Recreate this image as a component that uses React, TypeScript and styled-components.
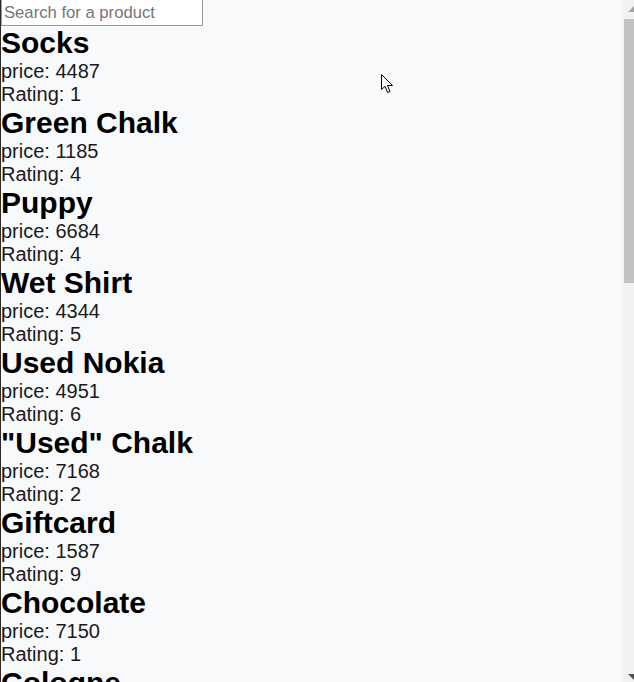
import React from "react";
import styled, { createGlobalStyle } from "styled-components";

const Global = createGlobalStyle`
  html, body { margin: 0; padding: 0; height: 100%; overflow: hidden; }
  body { background: #f8f9fb; font-family: "Liberation Sans", Arial, sans-serif; }
  #root { height: 100%; }
`;

const Page = styled.div`
  position: relative;
  height: 682px;
  box-sizing: border-box;
  border-left: 1px solid #2b2b2b;
  background: #f8f9fb;
  overflow: hidden;
  color: #111;
`;

const Search = styled.input`
  display: block;
  box-sizing: border-box;
  width: 202px;
  height: 26px;
  margin: 0;
  padding: 0 2px;
  border: 1px solid #9a9a9a;
  border-top-width: 0;
  background: #fff;
  font-family: "Liberation Sans", Arial, sans-serif;
  font-size: 16.67px;
  color: #111;
  outline: none;
  &::placeholder { color: #767676; }
`;

const List = styled.div`
  display: flex;
  flex-direction: column;
`;

const Product = styled.div`
  display: flex;
  flex-direction: column;
`;

const Name = styled.h2`
  margin: 0;
  font-size: 30px;
  font-weight: bold;
  color: #000;
  line-height: 34px;
`;

const Line = styled.div`
  font-size: 20px;
  line-height: 23px;
  color: #1a1a1a;
`;

const Scrollbar = styled.div`
  position: absolute;
  top: 0;
  right: 0;
  width: 12px;
  height: 100%;
  background: #f1f1f1;
  display: flex;
  flex-direction: column;
`;

const Arrow = styled.svg`
  display: block;
  flex: none;
`;

const Thumb = styled.div`
  margin: 2px 0 0 2px;
  height: 264px;
  background: #c1c1c1;
`;

const Spacer = styled.div`
  flex: 1;
`;

const Cursor = styled.svg`
  position: absolute;
  left: 380px;
  top: 74px;
  pointer-events: none;
`;

const products: { name: string; price: number; rating: number }[] = [
  { name: "Socks", price: 4487, rating: 1 },
  { name: "Green Chalk", price: 1185, rating: 4 },
  { name: "Puppy", price: 6684, rating: 4 },
  { name: "Wet Shirt", price: 4344, rating: 5 },
  { name: "Used Nokia", price: 4951, rating: 6 },
  { name: '"Used" Chalk', price: 7168, rating: 2 },
  { name: "Giftcard", price: 1587, rating: 9 },
  { name: "Chocolate", price: 7150, rating: 1 },
  { name: "Cologne", price: 2934, rating: 7 },
  { name: "Blue Pen", price: 812, rating: 3 },
];

export default function App() {
  return (
    <>
      <Global />
      <Page>
        <Search placeholder="Search for a product" />
        <List>
          {products.map((p) => (
            <Product key={p.name}>
              <Name>{p.name}</Name>
              <Line>price: {p.price}</Line>
              <Line>Rating: {p.rating}</Line>
            </Product>
          ))}
        </List>
        <Scrollbar>
          <Arrow width="12" height="17" viewBox="0 0 12 17">
            <polygon points="6,12 12,6 12,12" fill="#a3a3a3" />
          </Arrow>
          <Thumb />
          <Spacer />
          <Arrow width="12" height="17" viewBox="0 0 12 17">
            <polygon points="6,9 12,9 12,15" fill="#505050" />
          </Arrow>
        </Scrollbar>
        <Cursor width="13" height="20" viewBox="0 0 13 20">
          <path
            d="M0.5 0.5 L0.5 15.5 L4 12.3 L6.6 18.5 L9 17.5 L6.5 11.5 L11.5 11.5 Z"
            fill="#fff"
            stroke="#000"
            strokeWidth="1"
            strokeLinejoin="round"
          />
        </Cursor>
      </Page>
    </>
  );
}
